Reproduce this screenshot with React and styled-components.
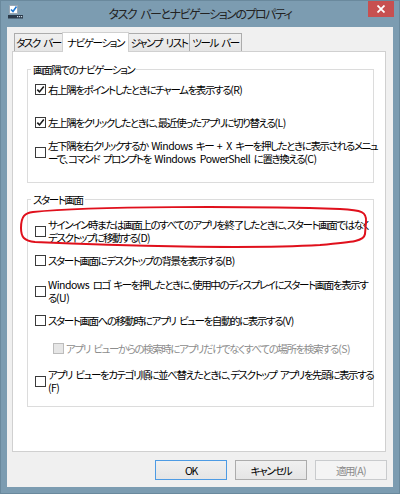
import React from "react";
import styled, { createGlobalStyle } from "styled-components";

const Global = createGlobalStyle`
  html, body { margin: 0; padding: 0; background: #7c9cb1; }
  body {
    font-family: "Noto Sans CJK JP", "Noto Sans", sans-serif;
    font-feature-settings: "palt";
  }
`;

const Window = styled.div`
  box-sizing: border-box;
  width: 400px;
  height: 494px;
  background: #7c9cb1;
  border: 1px solid #6a899d;
  padding: 0 6px 6px 6px;
  display: flex;
  flex-direction: column;
`;

const TitleBar = styled.div`
  height: 26px;
  display: grid;
  grid-template-columns: 40px 1fr 40px;
  align-items: center;
`;

const AppIcon = styled.svg`
  justify-self: start;
  margin-left: 1px;
  margin-top: 4px;
  align-self: start;
`;

const Title = styled.div`
  font-size: 12px;
  color: #222;
  letter-spacing: -1.5px;
  word-spacing: 3px;
  text-align: center;
  white-space: nowrap;
  margin-top: -1px;
`;

const CloseBtn = styled.div`
  justify-self: end;
  align-self: start;
  width: 26px;
  height: 16px;
  margin-right: -1px;
  background: #c75050;
  display: flex;
  align-items: center;
  justify-content: center;
`;

const Client = styled.div`
  flex: 1;
  background: #f0f0f0;
  display: flex;
  flex-direction: column;
  padding: 5px 6px 7px 5px;
  font-size: 10.5px;
  line-height: 13px;
  letter-spacing: -1.4px;
  word-spacing: 2.5px;
  color: #000;
`;

const Lat = styled.span`
  letter-spacing: -0.5px;
`;

const TabStrip = styled.div`
  display: flex;
  align-items: flex-end;
  height: 20px;
  padding-left: 2px;
  margin-bottom: -1px;
  position: relative;
  z-index: 1;
`;

const Tab = styled.div`
  box-sizing: border-box;
  width: ${(p) => p.$w}px;
  height: ${(p) => (p.$active ? 20 : 18)}px;
  margin-bottom: ${(p) => (p.$active ? 0 : 1)}px;
  border: 1px solid ${(p) => (p.$active ? "#d0d0d0" : "#acacac")};
  border-bottom: none;
  background: ${(p) =>
    p.$active ? "#ffffff" : "linear-gradient(#f0f0f0, #e5e5e5)"};
  display: flex;
  align-items: center;
  justify-content: center;
  white-space: nowrap;
  padding-bottom: ${(p) => (p.$active ? 1 : 0)}px;
  margin-left: ${(p) => (p.$first ? 0 : -1)}px;
  position: relative;
  z-index: ${(p) => (p.$active ? 2 : 1)};
`;

const Panel = styled.div`
  position: relative;
  flex: 1;
  background: #fff;
  border: 1px solid #d0d0d0;
  margin-right: 1px;
  padding: 11px 11px 0 14px;
  display: flex;
  flex-direction: column;
`;

const Group = styled.fieldset`
  margin: ${(p) => p.$mt || 0}px 0 0 0;
  min-width: 0;
  border: 1px solid #dcdcdc;
  padding: ${(p) => p.$pt}px 6px ${(p) => p.$pb}px 7px;
  display: flex;
  flex-direction: column;
`;

const Legend = styled.legend`
  padding: 0 2px;
  margin-left: -4px;
  line-height: 13px;
  white-space: nowrap;
`;

const Row = styled.div`
  display: flex;
  align-items: center;
  margin-top: ${(p) => p.$mt || 0}px;
  padding-left: ${(p) => p.$indent || 0}px;
  color: ${(p) => (p.$disabled ? "#8d8d8d" : "#000")};
`;

const Box = styled.span`
  box-sizing: border-box;
  flex: none;
  width: 11px;
  height: 11px;
  border: 1px solid ${(p) => (p.$disabled ? "#bcbcbc" : "#3a3a3a")};
  background: ${(p) => (p.$disabled ? "#e6e6e6" : "#fff")};
  margin-right: 2px;
  display: flex;
  align-items: center;
  justify-content: center;
`;

const Label = styled.span`
  white-space: nowrap;
`;

const Highlight = styled.svg`
  position: absolute;
  left: 5px;
  top: 151px;
  pointer-events: none;
`;

const ButtonBar = styled.div`
  display: flex;
  justify-content: flex-end;
  gap: 8px;
  margin-top: 8px;
`;

const Button = styled.div`
  box-sizing: border-box;
  width: 72px;
  height: 20px;
  display: flex;
  align-items: center;
  justify-content: center;
  border: 1px solid
    ${(p) => (p.$default ? "#4d9be4" : p.$disabled ? "#c9cbcd" : "#acacac")};
  background: ${(p) =>
    p.$disabled ? "#f4f4f4" : "linear-gradient(#f0f0f0, #e5e5e5)"};
  color: ${(p) => (p.$disabled ? "#8a8a8a" : "#000")};
  white-space: nowrap;
`;

const Check = ({ checked, disabled }) => (
  <Box $disabled={disabled}>
    {checked && (
      <svg width="9" height="9" viewBox="0 0 9 9">
        <path
          d="M1.3 4.6 L3.5 6.9 L7.8 1.6"
          fill="none"
          stroke="#1a1a1a"
          strokeWidth="1.6"
        />
      </svg>
    )}
  </Box>
);

const Option = ({ checked, disabled, mt, indent, children }) => (
  <Row $mt={mt} $indent={indent} $disabled={disabled}>
    <Check checked={checked} disabled={disabled} />
    <Label>{children}</Label>
  </Row>
);

export default function App() {
  return (
    <>
      <Global />
      <Window>
        <TitleBar>
          <AppIcon width="15" height="14" viewBox="0 0 15 14">
            <rect x="1.5" y="0.5" width="8" height="8" fill="#fff" stroke="#9aa7b3" />
            <path d="M3 4.5 L5 6.5 L8.5 1.5" fill="none" stroke="#1f78d1" strokeWidth="1.6" />
            <rect x="0" y="10" width="15" height="3.5" fill="#2b3a4a" />
            <rect x="9" y="11" width="1.2" height="1.2" fill="#c9d6e2" />
            <rect x="11" y="11" width="1.2" height="1.2" fill="#c9d6e2" />
            <rect x="13" y="11" width="1.2" height="1.2" fill="#c9d6e2" />
          </AppIcon>
          <Title>タスク バーとナビゲーションのプロパティ</Title>
          <CloseBtn>
            <svg width="8" height="8" viewBox="0 0 8 8">
              <path d="M0.5 0.5 L7.5 7.5 M7.5 0.5 L0.5 7.5" stroke="#fff" strokeWidth="1.8" />
            </svg>
          </CloseBtn>
        </TitleBar>
        <Client>
          <TabStrip>
            <Tab $w={49} $first>タスク バー</Tab>
            <Tab $w={67} $active>ナビゲーション</Tab>
            <Tab $w={62}>ジャンプ リスト</Tab>
            <Tab $w={53}>ツール バー</Tab>
          </TabStrip>
          <Panel>
            <Group $pt={7} $pb={17}>
              <Legend>画面隅でのナビゲーション</Legend>
              <Option checked>
                右上隅をポイントしたときにチャームを表示する<Lat>(R)</Lat>
              </Option>
              <Option checked mt={20}>
                左上隅をクリックしたときに、最近使ったアプリに切り替える<Lat>(L)</Lat>
              </Option>
              <Option mt={10}>
                左下隅を右クリックするか <Lat>Windows</Lat> キー <Lat>+ X</Lat> キーを押したときに表示されるメニュ
                <br />
                ーで、コマンド プロンプトを <Lat>Windows PowerShell</Lat> に置き換える<Lat>(C)</Lat>
              </Option>
            </Group>
            <Group $mt={10} $pt={12} $pb={12}>
              <Legend>スタート画面</Legend>
              <Option>
                サインイン時または画面上のすべてのアプリを終了したときに、スタート画面ではなく
                <br />
                デスクトップに移動する<Lat>(D)</Lat>
              </Option>
              <Option mt={10}>
                スタート画面にデスクトップの背景を表示する<Lat>(B)</Lat>
              </Option>
              <Option mt={11}>
                <Lat>Windows</Lat> ロゴ キーを押したときに、使用中のディスプレイにスタート画面を表示す
                <br />
                る<Lat>(U)</Lat>
              </Option>
              <Option mt={10}>
                スタート画面への移動時にアプリ ビューを自動的に表示する<Lat>(V)</Lat>
              </Option>
              <Option mt={15} indent={18} disabled>
                アプリ ビューからの検索時にアプリだけでなくすべての場所を検索する<Lat>(S)</Lat>
              </Option>
              <Option mt={13}>
                アプリ ビューをカテゴリ順に並べ替えたときに、デスクトップ アプリを先頭に表示する
                <br />
                <Lat>(F)</Lat>
              </Option>
            </Group>
            <Highlight width="352" height="48" viewBox="18 203 352 48">
              <path
                d="M33 212 C 90 206, 250 206, 340 209 C 362 210, 367 212, 366 222 L 365 234 C 364 241, 355 242, 320 245 C 250 249, 120 246, 35 242 C 24 241, 21 237, 21 228 C 21 216, 25 213, 33 212 Z"
                fill="none"
                stroke="#e0101c"
                strokeWidth="2"
              />
            </Highlight>
          </Panel>
          <ButtonBar>
            <Button $default>OK</Button>
            <Button>キャンセル</Button>
            <Button $disabled>
              適用<Lat>(A)</Lat>
            </Button>
          </ButtonBar>
        </Client>
      </Window>
    </>
  );
}
